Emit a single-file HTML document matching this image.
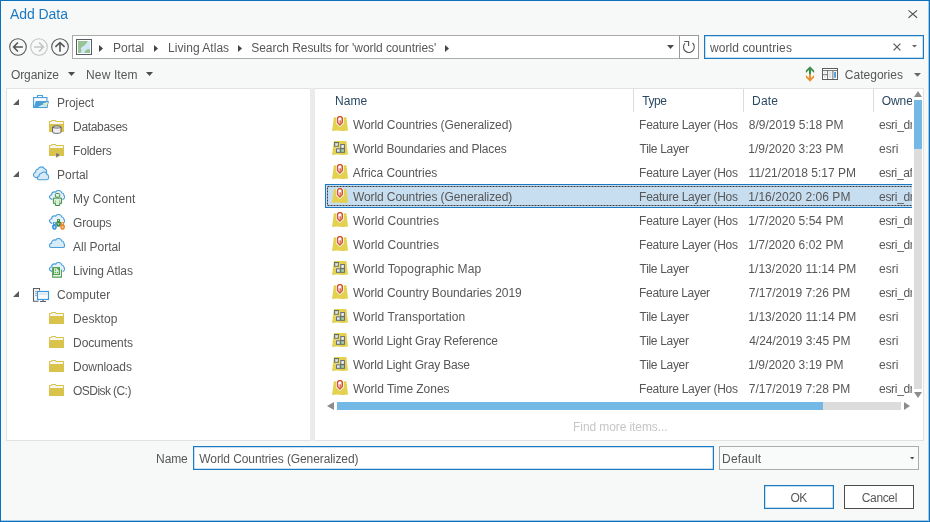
<!DOCTYPE html>
<html><head><meta charset="utf-8"><title>Add Data</title>
<style>
*{box-sizing:border-box;margin:0;padding:0}
html,body{width:930px;height:522px;overflow:hidden;background:#f7f8f8}
body{position:relative;font-family:"Liberation Sans",sans-serif;font-size:12px;color:#575757}
.abs{position:absolute}
.t{position:absolute;white-space:nowrap;line-height:16px;height:16px;transform-origin:0 50%}
#win{position:absolute;left:0;top:0;width:930px;height:522px;border:1px solid #0b72bf}
#win2{position:absolute;left:1px;top:1px;width:928px;height:520px;border:1px solid #a3cae8;border-width:0 1px 1px 0}
#title{left:10px;top:5px;font-size:14px;color:#1b7ac2;line-height:18px;height:18px}
.panel{position:absolute;background:#fff;border:1px solid #e2e2e2}
.hd{color:#2a4862}
.sep{position:absolute;top:89px;width:1px;height:23px;background:#dcdcdc}
.ic{position:absolute;width:16px;height:16px;overflow:visible}
svg{position:absolute;overflow:visible}
.gray{color:#c6c6c6}
</style></head><body>
<svg width="0" height="0" style="position:absolute">
<defs>
<symbol id="feat" viewBox="0 0 16 16">
<path d="M1.9 1.3 L14.4 1.3 L16 14.6 Q12 15.4 8 14.7 Q4 14 0 15 Z" fill="#e4d150"/>
<path d="M7.9 -0.1 C6 -0.1 4.8 1 4.8 2.8 L4.8 6.8 L7.9 9.9 L11 6.8 L11 2.8 C11 1 9.8 -0.1 7.9 -0.1 Z" fill="#d0512f" stroke="#fff" stroke-width="1.6" paint-order="stroke"/>
<path d="M7.9 1.2 C6.8 1.2 6.1 1.8 6.1 2.9 L6.1 6.3 L7.9 8.1 L9.7 6.3 L9.7 2.9 C9.7 1.8 9 1.2 7.9 1.2 Z" fill="#f6cfc3"/>
<circle cx="7.8" cy="2.9" r="1.25" fill="#fff"/>
<path d="M8.3 4.3 L8.3 7.2" stroke="#d2583a" stroke-width="0.9"/>
</symbol>
<symbol id="tile" viewBox="0 0 16 16">
<path d="M1.9 1.1 L14.4 1.1 L16 14.6 Q12 15.4 8 14.7 Q4 14 0 15 Z" fill="#e4d150"/>
<path d="M7.2 2.2 L7.2 7.6 L3.6 7.6 L3.6 9 L7.6 9 L7.6 3.6 Z" fill="#f3ebb0" opacity="0.7"/>
<rect x="2.6" y="2.5" width="3.7" height="3.7" fill="#e2f1f3" stroke="#5f646e" stroke-width="0.95"/>
<path d="M3.1 3 L5.2 3 L3.1 5.5 Z" fill="#a5d3a1"/>
<rect x="8.8" y="4.6" width="3.6" height="3.7" fill="#e9f4fc" stroke="#5f646e" stroke-width="0.95"/>
<rect x="4.6" y="8.8" width="3.6" height="3.5" fill="#e2f0f9" stroke="#5f646e" stroke-width="0.95"/>
<path d="M7.7 9.9 L7.7 11.8 L5.9 11.8 Z" fill="#a5d3a1"/>
<rect x="8.8" y="8.8" width="3.6" height="3.5" fill="#abd5a8" stroke="#5f646e" stroke-width="0.95"/>
</symbol>
<symbol id="folder" viewBox="0 0 16 16">
<path d="M0 14 L0 3.6 Q0 3 0.6 3 L1.8 3 Q2.3 2 3.2 2 L6.2 2 Q7 2 7.4 3 L14.4 3 Q15 3 15 3.6 L15 14 Z" fill="#d9c34b"/>
<path d="M1 6.1 L1 4 L2.4 4 Q2.8 3 3.6 3 L5.8 3 Q6.5 3 6.9 4 L14 4 L14 6.1 Z" fill="#f7f6f1"/>
</symbol>
<symbol id="cloud" viewBox="0 0 16 16">
<path d="M2 9.5 C0.9 9.5 0.5 8.6 0.5 7.6 C0.5 6.3 1.3 5.3 2.6 5.1 C2.6 3.2 3.8 1.9 5.6 1.9 C6 1.9 6.4 2 6.8 2.1 C7.3 1 8.4 0.5 9.6 0.5 C11.2 0.5 12.5 1.5 12.9 3 C14.2 3.2 15 4.2 15 5.5 C15 5.6 15 5.7 15 5.8 C15.4 6.1 15.6 6.8 15.6 7.5 C15.6 8.7 14.9 9.5 13.8 9.5 Z" fill="#d8ebf8" stroke="#4a9fd8" stroke-width="1.1"/>
</symbol>
<symbol id="cloudopen" viewBox="0 0 16 16">
<path d="M2.9 9.4 C1 9 0.4 7.8 0.5 6.6 C0.6 5.5 1.4 4.9 2.6 4.7 C2.7 3 3.8 1.9 5.6 1.9 C6 1.9 6.4 2 6.8 2.1 C7.3 1 8.4 0.5 9.6 0.5 C11.2 0.5 12.5 1.5 12.9 3 C14.2 3.2 15 4.2 15 5.5 C15.5 6 15.7 6.6 15.6 7.3 C15.5 8.4 14.9 9.1 14 9.4" fill="#e6f2fb" stroke="#4a9fd8" stroke-width="1.1" stroke-linecap="round"/>
</symbol>
</defs></svg>
<div id="root" style="position:absolute;left:0;top:0;width:930px;height:522px;will-change:transform">
<div id="win"></div><div id="win2"></div>
<div class="t " style="left:9.95px;top:5px;letter-spacing:-0.052px;color:#1b7ac2;font-size:14px;line-height:18px;height:18px">Add Data</div>

<svg style="left:908.3px;top:10px" width="9.6" height="8.2" viewBox="0 0 9.6 8.2"><path d="M0.5 0.4 L9.1 7.8 M9.1 0.4 L0.5 7.8" stroke="#555" stroke-width="1.15" fill="none"/></svg>
<svg style="left:9px;top:38px" width="18" height="18" viewBox="0 0 18 18"><circle cx="9" cy="9" r="8.3" fill="none" stroke="#555" stroke-width="1.1"/><path d="M13.9 9 L5 9 M8.9 4.5 L4.6 9 L8.9 13.5" fill="none" stroke="#555" stroke-width="1.6"/></svg>
<svg style="left:30px;top:38px" width="18" height="18" viewBox="0 0 18 18"><circle cx="9" cy="9" r="8.3" fill="none" stroke="#c3c3c3" stroke-width="1.1"/><path d="M4.1 9 L13 9 M9.1 4.5 L13.4 9 L9.1 13.5" fill="none" stroke="#c3c3c3" stroke-width="1.6"/></svg>
<svg style="left:51px;top:38px" width="18" height="18" viewBox="0 0 18 18"><circle cx="9" cy="9" r="8.3" fill="none" stroke="#555" stroke-width="1.1"/><path d="M9 13.8 L9 5 M4.4 8.9 L9 4.5 L13.6 8.9" fill="none" stroke="#555" stroke-width="1.6"/></svg>
<div class="abs" style="left:72px;top:35px;width:608px;height:24px;background:#fff;border:1px solid #ababab"></div>
<div class="abs" style="left:679px;top:35px;width:20px;height:24px;background:#fff;border:1px solid #9a9a9a"></div>
<svg style="left:76px;top:39px" width="16" height="16" viewBox="0 0 16 16"><rect x="0.5" y="0.5" width="15" height="15" fill="#fff" stroke="#585c62" stroke-width="1"/><rect x="2" y="2" width="12" height="12" fill="#d3e8f6"/><path d="M2 2 L11.6 2 C11 4 10.2 4.6 9.2 5.4 C8.6 6.6 7.4 7 6.6 7.6 C6 8.6 5 8.6 4.8 9.4 C5.4 10.4 5.2 11.2 5.8 11.8 C5 12.6 5 13.4 4.6 14 L2 14 Z" fill="#97c493"/><path d="M14 14 L8.2 14 C8.8 12 10 10.4 11.6 10.2 C12.6 10 13.4 10.2 14 10.6 Z" fill="#97c493"/></svg>
<svg style="left:98.6px;top:45px" width="4" height="7" viewBox="0 0 4 7"><path d="M0 0 L4 3.5 L0 7 Z" fill="#444"/></svg>
<svg style="left:153.5px;top:45px" width="4" height="7" viewBox="0 0 4 7"><path d="M0 0 L4 3.5 L0 7 Z" fill="#444"/></svg>
<svg style="left:237.6px;top:45px" width="4" height="7" viewBox="0 0 4 7"><path d="M0 0 L4 3.5 L0 7 Z" fill="#444"/></svg>
<svg style="left:445.4px;top:45px" width="4" height="7" viewBox="0 0 4 7"><path d="M0 0 L4 3.5 L0 7 Z" fill="#444"/></svg>
<div class="t " style="left:113.1px;top:40px;letter-spacing:-0.053px;">Portal</div>
<div class="t " style="left:168.1px;top:40px;letter-spacing:0.026px;">Living Atlas</div>
<div class="t " style="left:251.3px;top:40px;letter-spacing:-0.067px;">Search Results for 'world countries'</div>
<svg style="left:667px;top:45px" width="7" height="4" viewBox="0 0 7 4"><path d="M0 0 L7 0 L3.5 4 Z" fill="#4c4c4c"/></svg>
<svg style="left:682px;top:40px" width="14" height="14" viewBox="0 0 14 14"><path d="M10.5 3 A5.4 5.4 0 1 1 3 3.3" fill="none" stroke="#555" stroke-width="1.1"/><path d="M2.3 1.5 L6.6 1.5 L6.6 5.9" fill="none" stroke="#555" stroke-width="1.1"/></svg>
<div class="abs" style="left:704px;top:35px;width:220px;height:24px;background:#fff;border:1px solid #1b7ac2;box-shadow:inset 0 0 0 0.5px #8fc0e4"></div>
<div class="t " style="left:709.9px;top:40px;letter-spacing:0.092px;">world countries</div>
<svg style="left:893px;top:43px" width="8" height="8" viewBox="0 0 8 8"><path d="M0.6 0.6 L7.4 7.4 M7.4 0.6 L0.6 7.4" stroke="#5e5e5e" stroke-width="1.3" fill="none"/></svg>
<svg style="left:912.2px;top:44.6px" width="5" height="2.6" viewBox="0 0 5 2.6"><path d="M0 0 L5 0 L2.5 2.6 Z" fill="#666"/></svg>
<div class="t " style="left:10.91px;top:67px;letter-spacing:-0.088px;">Organize</div>
<svg style="left:68px;top:72px" width="7" height="4" viewBox="0 0 7 4"><path d="M0 0 L7 0 L3.5 4 Z" fill="#4c4c4c"/></svg>
<div class="t " style="left:86.1px;top:67px;letter-spacing:0.115px;">New Item</div>
<svg style="left:146px;top:72px" width="7" height="4" viewBox="0 0 7 4"><path d="M0 0 L7 0 L3.5 4 Z" fill="#4c4c4c"/></svg>
<svg style="left:805px;top:66px" width="10" height="16" viewBox="0 0 10 16"><path d="M5 0.3 L9.1 4.4 L9.1 6.9 L6 3.9 L6 8 L4 8 L4 3.9 L0.9 6.9 L0.9 4.4 Z" fill="#3f8f48"/><path d="M5 15.7 L9.1 11.6 L9.1 9.1 L6 12.1 L6 8 L4 8 L4 12.1 L0.9 9.1 L0.9 11.6 Z" fill="#e8932f"/></svg>
<svg style="left:822px;top:68px" width="16" height="12" viewBox="0 0 16 12"><rect x="0.5" y="0.5" width="15" height="11" fill="#fff" stroke="#5c5c5c"/><path d="M0.5 2.6 L15.5 2.6 M5.6 2.6 L5.6 11.5 M10.9 2.6 L10.9 11.5 M0.5 6.7 L5.6 6.7" stroke="#5c5c5c" stroke-width="0.9" fill="none"/><rect x="7" y="4" width="2.6" height="6" fill="#e4e4e4"/><rect x="12.1" y="4" width="1.9" height="5.8" fill="#4a9fe0"/><rect x="1.8" y="4" width="2.2" height="0.9" fill="#ddd"/><rect x="2" y="8.2" width="1.8" height="1.6" fill="#ddd"/></svg>
<div class="t " style="left:844.85px;top:67px;letter-spacing:0.01px;">Categories</div>
<svg style="left:913.5px;top:73.3px" width="7" height="3.7" viewBox="0 0 7 3.7"><path d="M0 0 L7 0 L3.5 3.7 Z" fill="#666"/></svg>
<div class="panel" style="left:6px;top:88px;width:305px;height:353px"></div>
<div class="abs" style="left:310px;top:88px;width:5px;height:353px;background:#ebebeb"></div>
<div class="panel" style="left:315px;top:88px;width:609px;height:353px;border-left:none"></div>
<svg style="left:13px;top:99px" width="6" height="6" viewBox="0 0 6 6"><path d="M6 0 L6 6 L0 6 Z" fill="#5a5a5a"/></svg>
<svg class="ic" style="left:33px;top:94px" viewBox="0 0 16 16"><path d="M4.5 3.2 L4.5 1.5 L9.5 1.5 L9.5 3.2" fill="none" stroke="#4a9fd8" stroke-width="1.1"/><rect x="0.55" y="3.5" width="13.4" height="10" fill="#f9f9f9" stroke="#4a9fd8" stroke-width="1.1"/><path d="M2.8 7.1 L16 7.1 L14.3 13.9 L0.6 13.9 Z" fill="#4a9fd8"/><path d="M4.8 13.1 L14.8 7.9 L13.5 13.1 Z" fill="#d2e9f6"/><path d="M9.6 9.6 L14.8 7.9 L13.6 12.4 Z" fill="#e3edc4"/><path d="M9.8 9.6 L12.8 12" stroke="#a9cf96" stroke-width="0.7"/></svg>
<div class="t " style="left:57.1px;top:95px;letter-spacing:-0.049px;">Project</div>
<svg class="ic" style="left:49px;top:118px" viewBox="0 0 16 16"><use href="#folder"/><path d="M3.6 9 C3.6 7.6 12 7.6 12 9 L12 14.2 C12 15.7 3.6 15.7 3.6 14.2 Z" fill="#f5f5f5" stroke="#5a5e66" stroke-width="1"/><path d="M3.6 9 C3.6 10.4 12 10.4 12 9" fill="none" stroke="#5a5e66" stroke-width="1"/><path d="M4.5 12.6 L11 12.6" stroke="#ddd" stroke-width="0.6"/></svg>
<div class="t " style="left:73.1px;top:119px;letter-spacing:-0.338px;">Databases</div>
<svg class="ic" style="left:49px;top:142px" viewBox="0 0 16 16"><use href="#folder"/><path d="M7 10.4 L11.4 13.1 L7 15.8 Z" fill="#666a70" stroke="#e8da8a" stroke-width="0.5"/></svg>
<div class="t " style="left:73.1px;top:143px;letter-spacing:-0.214px;">Folders</div>
<svg style="left:13px;top:171px" width="6" height="6" viewBox="0 0 6 6"><path d="M6 0 L6 6 L0 6 Z" fill="#5a5a5a"/></svg>
<svg class="ic" style="left:33px;top:166px" viewBox="0 0 16 16"><path d="M4.4 11.6 C1.6 11.8 0.5 10.2 0.5 8.8 C0.5 7.4 1.4 6.4 2.6 6.2 C2.4 4.4 3.6 3.2 5 3.1 C5.6 1.6 7 0.9 8.4 0.9 C10 0.9 11 1.8 11.4 2.8 C12.8 3 13.8 4.4 13.6 6 L13.6 9 Z" fill="#d6eaf8" stroke="#4a9fd8" stroke-width="1.1"/><path d="M6 13.8 C4.8 13.8 4.4 12.9 4.4 12 C4.4 10.9 5.1 10.2 6 10 C6 8.3 7.2 7.4 8.4 7.2 C9.2 6.3 10.2 6 11 6 C12.6 6 13.6 7 13.9 8.4 C14.9 8.6 15.6 9.4 15.6 10.6 C15.7 11.2 15.6 11.4 15.5 11.8 C15.6 13 14.8 13.8 13.8 13.8 Z" fill="#d6eaf8" stroke="#4a9fd8" stroke-width="1.1"/></svg>
<div class="t " style="left:57.1px;top:167px;letter-spacing:-0.035px;">Portal</div>
<svg class="ic" style="left:49px;top:190px" viewBox="0 0 16 16"><use href="#cloudopen"/><rect x="6.4" y="3.5" width="4.3" height="3.6" rx="1" fill="#e9f4e5" stroke="#3f8a45" stroke-width="1"/><path d="M4.4 8.1 L12.6 8.1 L12.6 13.4 L10.7 13.4 L10.7 15.5 L6.4 15.5 L6.4 13.4 L4.4 13.4 Z" fill="#dcefd7" stroke="#3f8a45" stroke-width="1"/><path d="M6.4 10.4 L6.4 13.4 M10.7 10.4 L10.7 13.4" stroke="#7fb782" stroke-width="0.8"/></svg>
<div class="t " style="left:73.1px;top:191px;letter-spacing:0.111px;">My Content</div>
<svg class="ic" style="left:49px;top:214px" viewBox="0 0 16 16"><use href="#cloudopen"/><rect x="8.1" y="5.1" width="2.9" height="2.9" fill="#3f8a45"/><path d="M7.2 7.8 L11.9 7.8 L11.9 10.899999999999999 L10.6 12.7 L8.5 12.7 L7.2 10.899999999999999 Z" fill="#3f8a45"/><rect x="9.1" y="6.0" width="0.9" height="0.9" fill="#fff" opacity="0.85"/><path d="M8.4 9.3 L10.7 9.3 L9.55 11.3 Z" fill="#fff" opacity="0.75"/><rect x="4.0" y="8.2" width="2.9" height="2.9" fill="#3f96dc"/><path d="M3.1 10.899999999999999 L7.800000000000001 10.899999999999999 L7.800000000000001 14.0 L6.5 15.799999999999999 L4.4 15.799999999999999 L3.1 14.0 Z" fill="#3f96dc"/><rect x="5.0" y="9.1" width="0.9" height="0.9" fill="#fff" opacity="0.85"/><path d="M4.3 12.399999999999999 L6.6 12.399999999999999 L5.45 14.399999999999999 Z" fill="#fff" opacity="0.75"/><rect x="12.1" y="8.2" width="2.9" height="2.9" fill="#e8892f"/><path d="M11.2 10.899999999999999 L15.899999999999999 10.899999999999999 L15.899999999999999 14.0 L14.6 15.799999999999999 L12.5 15.799999999999999 L11.2 14.0 Z" fill="#e8892f"/><rect x="13.1" y="9.1" width="0.9" height="0.9" fill="#fff" opacity="0.85"/><path d="M12.399999999999999 12.399999999999999 L14.7 12.399999999999999 L13.549999999999999 14.399999999999999 Z" fill="#fff" opacity="0.75"/></svg>
<div class="t " style="left:73.05px;top:215px;letter-spacing:-0.155px;">Groups</div>
<svg class="ic" style="left:49px;top:238px" viewBox="0 0 16 16"><use href="#cloud"/></svg>
<div class="t " style="left:73.07px;top:239px;letter-spacing:-0.039px;">All Portal</div>
<svg class="ic" style="left:49px;top:262px" viewBox="0 0 16 16"><use href="#cloudopen"/><path d="M3.6 12 L3.6 15.1 L12.4 15.1 L12.4 7.6" fill="#fff" stroke="#4f9f52" stroke-width="1.1"/><rect x="3.1" y="5.1" width="7.9" height="8" fill="#4f9f52"/><path d="M5 6.3 L7.8 6.3 L9.8 8.6 L9.8 12 L5 12 Z" fill="#d8ecd4"/><rect x="5.9" y="7.4" width="0.9" height="1.6" fill="#4f9f52"/><rect x="5.8" y="10" width="1.1" height="1.1" fill="#4f9f52"/><rect x="7.9" y="10" width="1.1" height="1.1" fill="#4f9f52"/></svg>
<div class="t " style="left:73.1px;top:263px;letter-spacing:-0.082px;">Living Atlas</div>
<svg style="left:13px;top:291px" width="6" height="6" viewBox="0 0 6 6"><path d="M6 0 L6 6 L0 6 Z" fill="#5a5a5a"/></svg>
<svg class="ic" style="left:33px;top:286px" viewBox="0 0 16 16"><path d="M6.5 4.5 L6.5 2.5 L0.5 2.5 L0.5 15.3 L5.6 15.3" fill="#fafafa" stroke="#5a5e64" stroke-width="1.1"/><path d="M2 5.3 L4 5.3 M2 7.3 L4 7.3 M2 9.4 L4 9.4" stroke="#8d9096" stroke-width="0.8"/><rect x="4.5" y="5.5" width="11" height="8" fill="#fbfbfb" stroke="#3f98dd" stroke-width="1.2"/><rect x="6.2" y="7.2" width="7.6" height="1.8" fill="#d2e8f7"/><path d="M10 14 L10 15.4" stroke="#5a5e64" stroke-width="1.2"/><path d="M7 15.5 L13 15.5" stroke="#5a5e64" stroke-width="1"/></svg>
<div class="t " style="left:56.95px;top:287px;letter-spacing:0.096px;">Computer</div>
<svg class="ic" style="left:49px;top:310px" viewBox="0 0 16 16"><use href="#folder"/></svg>
<div class="t " style="left:73.1px;top:311px;letter-spacing:0.033px;">Desktop</div>
<svg class="ic" style="left:49px;top:334px" viewBox="0 0 16 16"><use href="#folder"/></svg>
<div class="t " style="left:73.1px;top:335px;letter-spacing:-0.113px;">Documents</div>
<svg class="ic" style="left:49px;top:358px" viewBox="0 0 16 16"><use href="#folder"/></svg>
<div class="t " style="left:73.1px;top:359px;letter-spacing:-0.065px;">Downloads</div>
<svg class="ic" style="left:49px;top:382px" viewBox="0 0 16 16"><use href="#folder"/></svg>
<div class="t " style="left:73.11px;top:383px;letter-spacing:-0.573px;">OSDisk (C:)</div>
<div class="sep" style="left:633px"></div>
<div class="sep" style="left:743px"></div>
<div class="sep" style="left:873px"></div>
<div class="t hd" style="left:335.1px;top:93px;letter-spacing:-0.002px;">Name</div>
<div class="t hd" style="left:642.31px;top:93px;letter-spacing:-0.465px;">Type</div>
<div class="t hd" style="left:752.1px;top:93px;letter-spacing:0.167px;">Date</div>
<div class="abs" style="left:881.81px;top:93px;width:30.39px;height:16px;overflow:hidden"><div class="t hd" style="left:0;top:0;letter-spacing:-0.098px;">Owner</div></div>
<div class="abs" style="left:325px;top:184px;width:587px;height:24px;background:#c7ddf0;border:1px solid #1b7ac2;border-right:none;overflow:hidden"><svg style="left:0;top:0" width="600" height="22" viewBox="0 0 600 22"><rect x="1.5" y="1.5" width="620" height="19" fill="none" stroke="#3c3c3c" stroke-width="1" stroke-dasharray="2 1"/></svg></div>
<svg class="ic" style="left:332px;top:116px" viewBox="0 0 16 16"><use href="#feat"/></svg>
<div class="t " style="left:352.9px;top:117px;letter-spacing:-0.089px;">World Countries (Generalized)</div>
<div class="t " style="left:639.1px;top:117px;letter-spacing:-0.264px;">Feature Layer (Hos</div>
<div class="t " style="left:748.85px;top:117px;letter-spacing:-0.011px;">8/9/2019 5:18 PM</div>
<div class="abs" style="left:879.07px;top:117px;width:33.13px;height:16px;overflow:hidden"><div class="t " style="left:0;top:0;letter-spacing:-0.312px;">esri_dm</div></div>
<svg class="ic" style="left:332px;top:140px" viewBox="0 0 16 16"><use href="#tile"/></svg>
<div class="t " style="left:352.9px;top:141px;letter-spacing:-0.157px;">World Boundaries and Places</div>
<div class="t " style="left:639.61px;top:141px;letter-spacing:-0.328px;">Tile Layer</div>
<div class="t " style="left:748.3px;top:141px;letter-spacing:0.027px;">1/9/2020 3:23 PM</div>
<div class="abs" style="left:879.07px;top:141px;width:33.13px;height:16px;overflow:hidden"><div class="t " style="left:0;top:0;letter-spacing:-0.022px;">esri</div></div>
<svg class="ic" style="left:332px;top:164px" viewBox="0 0 16 16"><use href="#feat"/></svg>
<div class="t " style="left:352.87px;top:165px;letter-spacing:-0.066px;">Africa Countries</div>
<div class="t " style="left:639.1px;top:165px;letter-spacing:-0.264px;">Feature Layer (Hos</div>
<div class="t " style="left:748.6px;top:165px;letter-spacing:0.016px;">11/21/2018 5:17 PM</div>
<div class="abs" style="left:879.07px;top:165px;width:33.13px;height:16px;overflow:hidden"><div class="t " style="left:0;top:0;letter-spacing:-0.376px;">esri_africa</div></div>
<svg class="ic" style="left:332px;top:188px" viewBox="0 0 16 16"><use href="#feat"/></svg>
<div class="t " style="left:352.9px;top:189px;letter-spacing:-0.089px;">World Countries (Generalized)</div>
<div class="t " style="left:639.1px;top:189px;letter-spacing:-0.264px;">Feature Layer (Hos</div>
<div class="t " style="left:748.3px;top:189px;letter-spacing:0.043px;">1/16/2020 2:06 PM</div>
<div class="abs" style="left:879.07px;top:189px;width:33.13px;height:16px;overflow:hidden"><div class="t " style="left:0;top:0;letter-spacing:-0.312px;">esri_dm</div></div>
<svg class="ic" style="left:332px;top:212px" viewBox="0 0 16 16"><use href="#feat"/></svg>
<div class="t " style="left:352.9px;top:213px;letter-spacing:0.02px;">World Countries</div>
<div class="t " style="left:639.1px;top:213px;letter-spacing:-0.264px;">Feature Layer (Hos</div>
<div class="t " style="left:748.3px;top:213px;letter-spacing:0.027px;">1/7/2020 5:54 PM</div>
<div class="abs" style="left:879.07px;top:213px;width:33.13px;height:16px;overflow:hidden"><div class="t " style="left:0;top:0;letter-spacing:-0.312px;">esri_dm</div></div>
<svg class="ic" style="left:332px;top:236px" viewBox="0 0 16 16"><use href="#feat"/></svg>
<div class="t " style="left:352.9px;top:237px;letter-spacing:0.02px;">World Countries</div>
<div class="t " style="left:639.1px;top:237px;letter-spacing:-0.264px;">Feature Layer (Hos</div>
<div class="t " style="left:748.3px;top:237px;letter-spacing:0.027px;">1/7/2020 6:02 PM</div>
<div class="abs" style="left:879.07px;top:237px;width:33.13px;height:16px;overflow:hidden"><div class="t " style="left:0;top:0;letter-spacing:-0.312px;">esri_dm</div></div>
<svg class="ic" style="left:332px;top:260px" viewBox="0 0 16 16"><use href="#tile"/></svg>
<div class="t " style="left:352.9px;top:261px;letter-spacing:0.099px;">World Topographic Map</div>
<div class="t " style="left:639.61px;top:261px;letter-spacing:-0.328px;">Tile Layer</div>
<div class="t " style="left:748.3px;top:261px;letter-spacing:0.042px;">1/13/2020 11:14 PM</div>
<div class="abs" style="left:879.07px;top:261px;width:33.13px;height:16px;overflow:hidden"><div class="t " style="left:0;top:0;letter-spacing:-0.022px;">esri</div></div>
<svg class="ic" style="left:332px;top:284px" viewBox="0 0 16 16"><use href="#feat"/></svg>
<div class="t " style="left:352.9px;top:285px;letter-spacing:-0.061px;">World Country Boundaries 2019</div>
<div class="t " style="left:639.1px;top:285px;letter-spacing:-0.315px;">Feature Layer</div>
<div class="t " style="left:748.79px;top:285px;letter-spacing:0.001px;">7/17/2019 7:26 PM</div>
<div class="abs" style="left:879.07px;top:285px;width:33.13px;height:16px;overflow:hidden"><div class="t " style="left:0;top:0;letter-spacing:-0.312px;">esri_dm</div></div>
<svg class="ic" style="left:332px;top:308px" viewBox="0 0 16 16"><use href="#tile"/></svg>
<div class="t " style="left:352.9px;top:309px;letter-spacing:0.055px;">World Transportation</div>
<div class="t " style="left:639.61px;top:309px;letter-spacing:-0.328px;">Tile Layer</div>
<div class="t " style="left:748.3px;top:309px;letter-spacing:0.042px;">1/13/2020 11:14 PM</div>
<div class="abs" style="left:879.07px;top:309px;width:33.13px;height:16px;overflow:hidden"><div class="t " style="left:0;top:0;letter-spacing:-0.022px;">esri</div></div>
<svg class="ic" style="left:332px;top:332px" viewBox="0 0 16 16"><use href="#tile"/></svg>
<div class="t " style="left:352.9px;top:333px;letter-spacing:-0.135px;">World Light Gray Reference</div>
<div class="t " style="left:639.61px;top:333px;letter-spacing:-0.328px;">Tile Layer</div>
<div class="t " style="left:749.19px;top:333px;letter-spacing:-0.006px;">4/24/2019 3:45 PM</div>
<div class="abs" style="left:879.07px;top:333px;width:33.13px;height:16px;overflow:hidden"><div class="t " style="left:0;top:0;letter-spacing:-0.022px;">esri</div></div>
<svg class="ic" style="left:332px;top:356px" viewBox="0 0 16 16"><use href="#tile"/></svg>
<div class="t " style="left:352.9px;top:357px;letter-spacing:-0.169px;">World Light Gray Base</div>
<div class="t " style="left:639.61px;top:357px;letter-spacing:-0.328px;">Tile Layer</div>
<div class="t " style="left:748.3px;top:357px;letter-spacing:0.027px;">1/9/2020 3:19 PM</div>
<div class="abs" style="left:879.07px;top:357px;width:33.13px;height:16px;overflow:hidden"><div class="t " style="left:0;top:0;letter-spacing:-0.022px;">esri</div></div>
<svg class="ic" style="left:332px;top:380px" viewBox="0 0 16 16"><use href="#feat"/></svg>
<div class="t " style="left:352.9px;top:381px;letter-spacing:-0.033px;">World Time Zones</div>
<div class="t " style="left:639.1px;top:381px;letter-spacing:-0.264px;">Feature Layer (Hos</div>
<div class="t " style="left:748.79px;top:381px;letter-spacing:0.001px;">7/17/2019 7:28 PM</div>
<div class="abs" style="left:879.07px;top:381px;width:33.13px;height:16px;overflow:hidden"><div class="t " style="left:0;top:0;letter-spacing:-0.312px;">esri_dm</div></div>
<div class="abs" style="left:913px;top:89px;width:10px;height:312px;background:#fff"></div>
<div class="abs" style="left:914px;top:100px;width:8px;height:289px;background:#dcdcdc"></div>
<div class="abs" style="left:914px;top:100px;width:8px;height:48.5px;background:#74b8e6"></div>
<svg style="left:914px;top:91px" width="8" height="6" viewBox="0 0 8 6"><path d="M4 0 L8 6 L0 6 Z" fill="#8c8c8c"/></svg>
<svg style="left:914px;top:392px" width="8" height="6" viewBox="0 0 8 6"><path d="M0 0 L8 0 L4 6 Z" fill="#8c8c8c"/></svg>
<div class="abs" style="left:337px;top:402px;width:564px;height:8px;background:#dcdcdc"></div>
<div class="abs" style="left:337px;top:402px;width:486px;height:8px;background:#74b8e6"></div>
<svg style="left:327px;top:402px" width="7" height="8" viewBox="0 0 7 8"><path d="M7 0 L7 8 L0 4 Z" fill="#8c8c8c"/></svg>
<svg style="left:904px;top:402px" width="6" height="8" viewBox="0 0 6 8"><path d="M0 0 L0 8 L6 4 Z" fill="#8c8c8c"/></svg>
<div class="t gray" style="left:573.1px;top:419px;letter-spacing:-0.095px;">Find more items...</div>
<div class="t " style="left:156.1px;top:451px;letter-spacing:-0.107px;">Name</div>
<div class="abs" style="left:193px;top:446px;width:521px;height:24px;background:#fff;border:1px solid #1b7ac2;box-shadow:inset 0 0 0 0.5px #8fc0e4"></div>
<div class="t " style="left:199.3px;top:451px;letter-spacing:-0.096px;">World Countries (Generalized)</div>
<div class="abs" style="left:719px;top:446px;width:200px;height:24px;background:#f9fafa;border:1px solid #ababab"></div>
<div class="t " style="left:722.1px;top:451px;letter-spacing:0.158px;">Default</div>
<svg style="left:909.5px;top:457.3px" width="4.4" height="2.6" viewBox="0 0 4.4 2.6"><path d="M0 0 L4.4 0 L2.2 2.6 Z" fill="#4c4c4c"/></svg>
<div class="abs" style="left:764px;top:485px;width:70px;height:24px;background:#fff;border:1px solid #1b7ac2;box-shadow:inset 0 0 0 0.5px #8fc0e4"></div>
<div class="t " style="left:790.51px;top:490px;letter-spacing:-0.525px;">OK</div>
<div class="abs" style="left:844px;top:485px;width:70px;height:24px;background:#fff;border:1px solid #4c4c4c"></div>
<div class="t " style="left:861.75px;top:490px;letter-spacing:-0.357px;">Cancel</div>
</div></body></html>
